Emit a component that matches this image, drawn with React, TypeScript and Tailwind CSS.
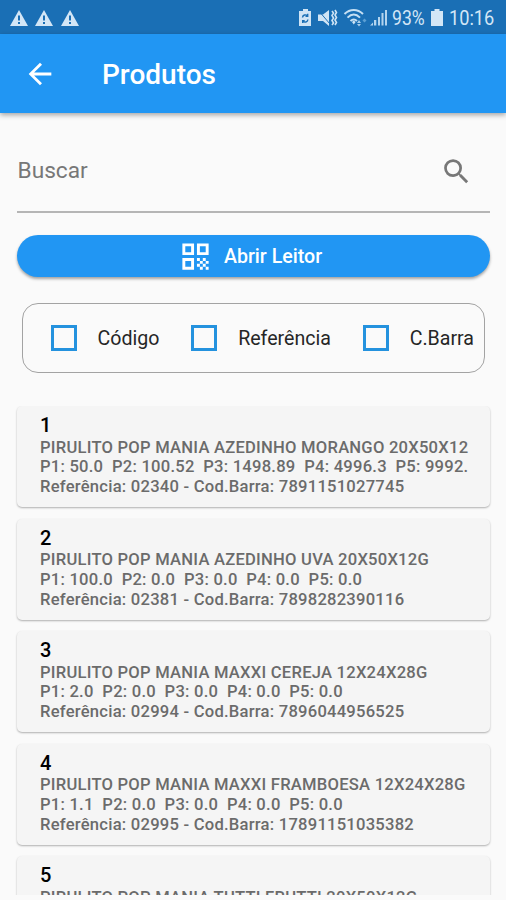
import { MdArrowBack, MdQrCode, MdSearch } from "react-icons/md"

type Product = {
  id: number
  name: string
  prices: string
  codes: string
}

const products: Product[] = [
  {
    id: 1,
    name: "PIRULITO POP MANIA AZEDINHO MORANGO 20X50X12",
    prices: "P1: 50.0  P2: 100.52  P3: 1498.89  P4: 4996.3  P5: 9992.",
    codes: "Referência: 02340 - Cod.Barra: 7891151027745",
  },
  {
    id: 2,
    name: "PIRULITO POP MANIA AZEDINHO UVA 20X50X12G",
    prices: "P1: 100.0  P2: 0.0  P3: 0.0  P4: 0.0  P5: 0.0",
    codes: "Referência: 02381 - Cod.Barra: 7898282390116",
  },
  {
    id: 3,
    name: "PIRULITO POP MANIA MAXXI CEREJA 12X24X28G",
    prices: "P1: 2.0  P2: 0.0  P3: 0.0  P4: 0.0  P5: 0.0",
    codes: "Referência: 02994 - Cod.Barra: 7896044956525",
  },
  {
    id: 4,
    name: "PIRULITO POP MANIA MAXXI FRAMBOESA 12X24X28G",
    prices: "P1: 1.1  P2: 0.0  P3: 0.0  P4: 0.0  P5: 0.0",
    codes: "Referência: 02995 - Cod.Barra: 17891151035382",
  },
  {
    id: 5,
    name: "PIRULITO POP MANIA TUTTI FRUTTI 20X50X12G",
    prices: "",
    codes: "",
  },
]

const WarningIcon = () => (
  <svg width="18" height="16" viewBox="0 0 18 16" aria-hidden="true">
    <path d="M9 0 18 16H0Z" fill="#d3e6f6" />
    <path d="M8 5.5h2v5H8zM8 12h2v2H8z" fill="#1a6fb5" />
  </svg>
)

const StatusIcons = () => (
  <svg
    width="90"
    height="18"
    viewBox="0 0 90 18"
    fill="none"
    className="shrink-0"
    aria-hidden="true"
  >
    {/* battery saver */}
    <path d="M4 0h5v2h3v15H0V2h4Z" fill="#cfe4f5" />
    <path
      d="M3.5 8.5a2.8 2.8 0 0 1 5-1.5M8.7 4.8V7.2H6.5M8.9 10.5a2.8 2.8 0 0 1-5 1.5M3.7 14v-2.2h2"
      stroke="#1a6fb5"
      strokeWidth="1.4"
    />
    {/* muted, vibrating */}
    <path d="M19 5.5h5l6-4.5v16l-6-5h-5Z" fill="#cfe4f5" />
    <path d="m19 1 12 14" stroke="#1a6fb5" strokeWidth="1" />
    <path
      d="m33 2 1.500 2-1.500 2.500 1.500 2.500-1.500 2.500 1.500 2.500-1.500 2M36 1l1.500 2.500L36 6l1.500 2.500L36 11l1.500 2.500L36 16"
      stroke="#cfe4f5"
      strokeWidth="1.6"
    />
    {/* wifi */}
    <g stroke="#c5dff3" strokeWidth="2">
      <path d="M45.500 5c5.500-5.300 13-5.300 18.500 0" />
      <path d="M48.500 8.600c4-3.900 8.500-3.900 12.500 0" />
      <path d="M51.500 12c2.100-2 4.400-2 6.500 0" />
    </g>
    <path d="m53 13 1.800-1.500 1.800 1.500-1.800 2.500Z" fill="#cfe4f5" />
    <path d="M58 14l2-3 2 3ZM58 15h4l-2 2.500Z" fill="#a9ceeb" />
    <path d="m63.500 11.500 2-2 2 2-2 2Z" fill="#5b9fd4" />
    {/* signal */}
    <path
      d="M71 16.500h3v-3ZM75 16.500h2.300V11H75ZM79 16.500h2V8h-2ZM82.500 16.500h2V4h-2ZM86 16.500h2V1h-2Z"
      fill="#b3d4ee"
    />
  </svg>
)

const StatusBar = () => (
  <div className="flex h-[34px] items-center justify-between bg-[#1a6fb5] pt-px pr-[11px] pl-[10px] text-[#d3e6f6]">
    <div className="flex gap-[7.400px]">
      <WarningIcon />
      <WarningIcon />
      <WarningIcon />
    </div>
    <div className="flex items-center">
      <StatusIcons />
      <span className="ml-[3px] w-[35px] text-[20px] leading-none">
        <span className="inline-block origin-left scale-x-[0.88]">93%</span>
      </span>
      <svg width="12" height="17" viewBox="0 0 12 17" className="ml-[4px]">
        <path d="M3.5 0h5v2H12v15H0V2h3.5Z" fill="#d3e6f6" />
      </svg>
      <span className="ml-[6px] w-[46px] text-[20px] leading-none">
        <span className="inline-block origin-left scale-x-[0.91]">10:16</span>
      </span>
    </div>
  </div>
)

const FilterOption = ({ label }: { label: string }) => (
  <label className="flex items-center gap-[21px]">
    <span className="size-[26px] shrink-0 border-3 border-[#2492de]" />
    <span className="pt-px text-[19.6px] whitespace-nowrap text-[#262626]">
      {label}
    </span>
  </label>
)

const ProductCard = ({ product }: { product: Product }) => (
  <article className="h-[101px] shrink-0 overflow-hidden rounded-[5px] bg-[#f5f5f5] px-[23px] pt-[7px] whitespace-pre shadow-[0_1px_2px_rgba(0,0,0,0.3)]">
    <h2 className="text-[20px] leading-[24.5px] font-medium text-black">
      {product.id}
    </h2>
    <div className="text-[16.6px] leading-[19.7px] font-medium tracking-[0.23px] text-[#6b6b6b]">
      <p>{product.name}</p>
      <p>{product.prices}</p>
      <p>{product.codes}</p>
    </div>
  </article>
)

export default function App() {
  return (
    <main className="flex h-[900px] w-[506px] flex-col overflow-hidden bg-[#fafafa] font-['Roboto',sans-serif]">
      <StatusBar />
      <header className="z-10 flex h-[79px] shrink-0 items-center bg-[#2196f3] pl-[23px] text-white shadow-[0_2px_5px_rgba(0,0,0,0.35)]">
        <MdArrowBack size={34} />
        <h1 className="ml-[45px] pt-[3px] text-[28px] leading-none font-medium">
          Produtos
        </h1>
      </header>

      <div className="mr-[16px] ml-[17px] flex h-[100px] shrink-0 items-center justify-between border-b-2 border-[#b5b5b5] pt-[18px] pr-[17px] text-[#777]">
        <span className="pl-[0.5px] text-[22.7px]">Buscar</span>
        <MdSearch size={33} />
      </div>

      <button className="mr-[16px] ml-[17px] mt-[22px] flex h-[42px] shrink-0 items-center justify-center gap-[11px] rounded-full bg-[#2196f3] pr-[7px] text-white shadow-[0_2px_3px_rgba(0,0,0,0.35)]">
        <MdQrCode size={35} />
        <span className="pt-[2px] text-[19.6px] font-medium">Abrir Leitor</span>
      </button>

      <div className="mr-[21px] ml-[22px] mt-[26px] flex h-[70px] shrink-0 items-center justify-between rounded-[16px] border-[1.5px] border-[#a3a3a3] pr-[10px] pl-[27.5px]">
        <FilterOption label="Código" />
        <FilterOption label="Referência" />
        <FilterOption label="C.Barra" />
      </div>

      <section className="mt-[33px] flex h-[489px] shrink-0 flex-col gap-[11.6px] overflow-hidden pr-[16px] pl-[17px]">
        {products.map((product) => (
          <ProductCard key={product.id} product={product} />
        ))}
      </section>
    </main>
  )
}
